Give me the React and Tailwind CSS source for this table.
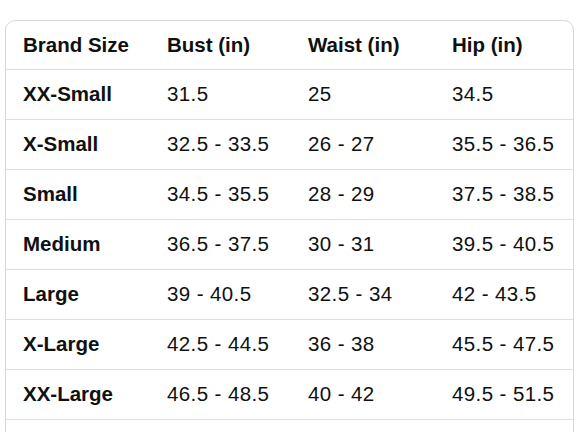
import React from "react";

const rows = [
  ["XX-Small", "31.5", "25", "34.5"],
  ["X-Small", "32.5 - 33.5", "26 - 27", "35.5 - 36.5"],
  ["Small", "34.5 - 35.5", "28 - 29", "37.5 - 38.5"],
  ["Medium", "36.5 - 37.5", "30 - 31", "39.5 - 40.5"],
  ["Large", "39 - 40.5", "32.5 - 34", "42 - 43.5"],
  ["X-Large", "42.5 - 44.5", "36 - 38", "45.5 - 47.5"],
  ["XX-Large", "46.5 - 48.5", "40 - 42", "49.5 - 51.5"],
];

const Row = ({ cells, header }) => (
  <div
    className={
      "grid grid-cols-[144px_141px_144px_1fr] items-center border-b border-[#dcdfdf] pl-[17px] " +
      (header ? "h-[49px]" : "h-[50px]")
    }
  >
    {cells.map((c, i) => (
      <div key={i} className={header || i === 0 ? "font-bold" : "tracking-[0.4px]"}>
        {c}
      </div>
    ))}
  </div>
);

const App = () => {
  return (
    <div className="w-[588px] h-[441px] bg-white">
      <div className="h-[432px] overflow-hidden pt-[20px] pl-[5px]">
        <div
          className="w-[569px] border border-[#d5d9d9] rounded-[10px] pb-[40px] text-[20.5px] text-[#0f1111]"
          style={{ fontFamily: '"Liberation Sans", Arial, sans-serif' }}
        >
          <Row header cells={["Brand Size", "Bust (in)", "Waist (in)", "Hip (in)"]} />
          {rows.map((r) => (
            <Row key={r[0]} cells={r} />
          ))}
        </div>
      </div>
    </div>
  );
};

export default App;
